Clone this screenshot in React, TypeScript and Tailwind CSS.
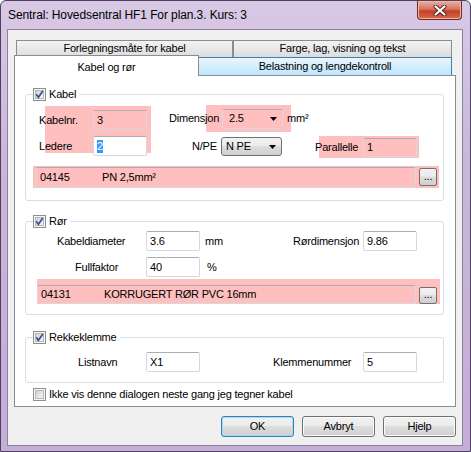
import React from "react";

const PINK = "bg-[#ffbfbf]";

function CheckBox({ checked }: { checked?: boolean }) {
  return (
    <svg width="13" height="13" viewBox="0 0 13 13" className="shrink-0">
      <defs>
        <linearGradient id="cbg" x1="0" y1="0" x2="1" y2="1">
          <stop offset="0" stopColor="#cfcfcf" />
          <stop offset="1" stopColor="#f8f8f8" />
        </linearGradient>
      </defs>
      <rect x="0.5" y="0.5" width="12" height="12" fill="#f6f6f6" stroke="#8e8f8f" />
      <rect x="2.5" y="2.5" width="8" height="8" fill="url(#cbg)" stroke="#b8b8b8" />
      {checked && <path d="M3.2 6.3 L5.4 9.2 L9.8 3.1" fill="none" stroke="#3b4f96" strokeWidth="1.7" />}
    </svg>
  );
}

function Arrow() {
  return (
    <svg width="7" height="4" viewBox="0 0 7 4" className="shrink-0">
      <path d="M0 0h7L3.5 4z" fill="#000" />
    </svg>
  );
}

function TextBox({ className, children }: { className: string; children?: React.ReactNode }) {
  return (
    <div className={`flex items-center shrink-0 border border-[#d5d8de] border-t-[#abadb3] rounded-[2px] pl-[3px] whitespace-nowrap ${className}`}>
      {children}
    </div>
  );
}

function Label({ className, children }: { className: string; children: React.ReactNode }) {
  return <span className={`relative z-10 shrink-0 whitespace-nowrap ${className}`}>{children}</span>;
}

function DotsButton({ className }: { className: string }) {
  return (
    <div className={`shrink-0 flex items-end justify-center pb-[3px] leading-none rounded-[2px] border border-[#707070] bg-[linear-gradient(#f2f2f2_0%,#ebebeb_45%,#dddddd_50%,#cfcfcf_100%)] ${className}`}>
      ...
    </div>
  );
}

function Btn({ children, def }: { children: React.ReactNode; def?: boolean }) {
  return (
    <div
      className={`w-[73px] h-[21px] rounded-[3px] border flex items-center justify-center bg-[linear-gradient(#f2f2f2_0%,#ebebeb_45%,#dddddd_50%,#cfcfcf_100%)] ${
        def ? "border-[#3c7fb1] shadow-[inset_0_0_0_1px_#9fdcf6]" : "border-[#707070] shadow-[inset_0_0_0_1px_#fbfbfb]"
      }`}
    >
      {children}
    </div>
  );
}

function Legend({ checked, children }: { checked?: boolean; children: React.ReactNode }) {
  return (
    <div className="-mt-[7px] ml-[7px] h-[13px] w-fit flex items-center gap-[3px] bg-white pr-[3px]">
      <CheckBox checked={checked} />
      <span className="leading-none">{children}</span>
    </div>
  );
}

export default function App() {
  return (
    <div className="w-[471px] h-[452px] overflow-hidden bg-white font-['Liberation_Sans',Arial,sans-serif] text-[11px] tracking-[-0.2px] text-black">
      <div className="w-[471px] h-[452px] rounded-t-[6px] border border-[#4f3f60] bg-[linear-gradient(180deg,#d8c9e5_0%,#cab6db_35%,#c4add7_100%)] flex flex-col">
        {/* title bar */}
        <div className="h-[28px] flex items-start shrink-0">
          <span className="ml-[7px] mt-[6px] text-[12px] tracking-[-0.1px] leading-[17px]">
            Sentral: Hovedsentral HF1 For plan.3. Kurs: 3
          </span>
          <div className="ml-auto mr-[8px] w-[45px] h-[19px] rounded-b-[4px] border border-t-0 border-[#6b2b22] bg-[linear-gradient(180deg,#eab0a4_0%,#d8745f_45%,#c3402a_55%,#d66a48_100%)] shadow-[inset_0_0_0_1px_#f0b8a8] flex items-center justify-center">
            <svg width="14" height="11" viewBox="0 0 14 11">
              <path d="M2.5 1.5 L11.5 9.5 M11.5 1.5 L2.5 9.5" stroke="#4a1f1a" strokeWidth="4" strokeLinecap="round" />
              <path d="M2.5 1.5 L11.5 9.5 M11.5 1.5 L2.5 9.5" stroke="#ffffff" strokeWidth="2.2" strokeLinecap="round" />
            </svg>
          </div>
        </div>

        {/* client area */}
        <div className="ml-[6px] w-[456px] h-[417px] border border-[#8c7f98] bg-[#f0f0f0] pl-[6px] pt-[10px]">
          {/* tab rows */}
          <div className="ml-[2px] flex h-[17px]">
            <div className="w-[217px] h-[17px] border border-b-0 border-[#898c95] bg-[linear-gradient(#f3f3f3,#dcdcdc)] flex items-start justify-center leading-[13px] pt-[1px]">
              Forlegningsmåte for kabel
            </div>
            <div className="w-[219px] h-[17px] border border-b-0 border-[#898c95] bg-[linear-gradient(#f3f3f3,#dcdcdc)] flex items-start justify-center leading-[13px] pt-[1px]">
              Farge, lag, visning og tekst
            </div>
          </div>
          <div className="-mt-[2px] flex items-start h-[20px]">
            <div className="relative z-10 w-[185px] h-[21px] border border-b-0 border-[#898c95] bg-white flex items-start justify-center pt-[3px]">
              Kabel og rør
            </div>
            <div className="mt-[2px] w-[253px] h-[18px] border border-b-0 border-l-0 border-[#3c7fb1] bg-[linear-gradient(#eaf6fd,#bee6fd)] flex items-center justify-center">
              Belastning og lengdekontroll
            </div>
          </div>

          {/* tab panel */}
          <div className="w-[442px] h-[332px] border border-[#898c95] bg-white pl-[10px] pt-[18px] flex flex-col">
            {/* Kabel */}
            <div className="w-[419px] h-[107px] border border-[#d5dfe5] rounded-[3px] shrink-0">
              <Legend checked>Kabel</Legend>
              <div className="flex items-start h-[57px]">
                <div className={`ml-[19px] mt-[5px] w-[106px] h-[47px] ${PINK} flex flex-col`}>
                  <div className="mt-[4px] flex items-center">
                    <Label className="-ml-[6px] w-[54px]">Kabelnr.</Label>
                    <TextBox className={`w-[54px] h-[20px] ${PINK}`}>3</TextBox>
                  </div>
                  <div className="mt-[6px] flex items-center">
                    <Label className="-ml-[6px] w-[54px]">Ledere</Label>
                    <TextBox className="w-[54px] h-[20px] bg-white">
                      <span className="bg-[#3399ff] text-white leading-[13px]">2</span>
                    </TextBox>
                  </div>
                </div>
                <div className="ml-[18px] w-[140px] flex flex-col">
                  <div className="mt-[4px] flex items-center h-[27px]">
                    <Label className="w-[37px]">Dimensjon</Label>
                    <div className={`w-[85px] h-[27px] pl-[16px] ${PINK} flex items-center`}>
                      <TextBox className={`w-[61px] h-[20px] ${PINK} pl-[6px] pr-[5px] justify-between`}>
                        <span>2.5</span>
                        <Arrow />
                      </TextBox>
                    </div>
                    <Label className="-ml-[4px]">mm²</Label>
                  </div>
                  <div className="mt-[5px] flex items-center">
                    <Label className="ml-[23px] w-[29px]">N/PE</Label>
                    <div className="w-[61px] h-[19px] rounded-[3px] border border-[#707070] bg-[linear-gradient(#f2f2f2_0%,#ebebeb_45%,#dddddd_50%,#cfcfcf_100%)] flex items-center justify-between pl-[4px] pr-[5px]">
                      <span>N PE</span>
                      <Arrow />
                    </div>
                  </div>
                </div>
                <div className={`ml-[10px] mt-[35px] w-[100px] h-[22px] ${PINK} flex items-center`}>
                  <Label className="-ml-[4px] w-[48px]">Parallelle</Label>
                  <TextBox className={`w-[54px] h-[19px] ${PINK}`}>1</TextBox>
                </div>
              </div>
              <div className={`mt-[8px] ml-[7px] w-[406px] h-[22px] ${PINK} flex items-center`}>
                <TextBox className={`ml-[2px] w-[381px] h-[21px] ${PINK}`}>
                  <span className="w-[63px] pl-[1px]">04145</span>
                  <span>PN 2,5mm²</span>
                </TextBox>
                <DotsButton className="ml-[3px] w-[18px] h-[18px]" />
              </div>
            </div>

            {/* Rør */}
            <div className="mt-[20px] w-[419px] h-[94px] border border-[#d5dfe5] rounded-[3px] shrink-0">
              <Legend checked>Rør</Legend>
              <div className="mt-[3px] flex items-center h-[20px]">
                <Label className="ml-[31px] w-[89px]">Kabeldiameter</Label>
                <TextBox className="w-[54px] h-[20px]">3.6</TextBox>
                <Label className="ml-[5px] w-[88px]">mm</Label>
                <Label className="w-[70px]">Rørdimensjon</Label>
                <TextBox className="w-[54px] h-[20px]">9.86</TextBox>
              </div>
              <div className="mt-[6px] flex items-center h-[20px]">
                <Label className="ml-[49px] w-[71px]">Fullfaktor</Label>
                <TextBox className="w-[54px] h-[20px]">40</TextBox>
                <Label className="ml-[7px]">%</Label>
              </div>
              <div className={`mt-[2px] ml-[11px] w-[403px] h-[25px] ${PINK} flex items-end`}>
                <TextBox className={`w-[379px] h-[19px] ${PINK} pl-[2px] border-[#b9b9b9]`}>
                  <span className="w-[63px]">04131</span>
                  <span>KORRUGERT RØR PVC 16mm</span>
                </TextBox>
                <DotsButton className="ml-[3px] w-[18px] h-[17px]" />
              </div>
            </div>

            {/* Rekkeklemme */}
            <div className="mt-[22px] w-[419px] h-[46px] border border-[#d5dfe5] rounded-[3px] shrink-0">
              <Legend checked>Rekkeklemme</Legend>
              <div className="mt-[8px] flex items-center h-[20px]">
                <Label className="ml-[52px] w-[68px]">Listnavn</Label>
                <TextBox className="w-[54px] h-[20px]">X1</TextBox>
                <Label className="ml-[73px] w-[90px]">Klemmenummer</Label>
                <TextBox className="w-[54px] h-[20px]">5</TextBox>
              </div>
            </div>

            <div className="mt-[5px] ml-[8px] h-[13px] flex items-center gap-[3px]">
              <CheckBox />
              <span className="leading-none">Ikke vis denne dialogen neste gang jeg tegner kabel</span>
            </div>
          </div>

          {/* buttons */}
          <div className="mt-[9px] w-[442px] flex justify-end gap-[8px]">
            <Btn def>OK</Btn>
            <Btn>Avbryt</Btn>
            <Btn>Hjelp</Btn>
          </div>
        </div>
      </div>
    </div>
  );
}
